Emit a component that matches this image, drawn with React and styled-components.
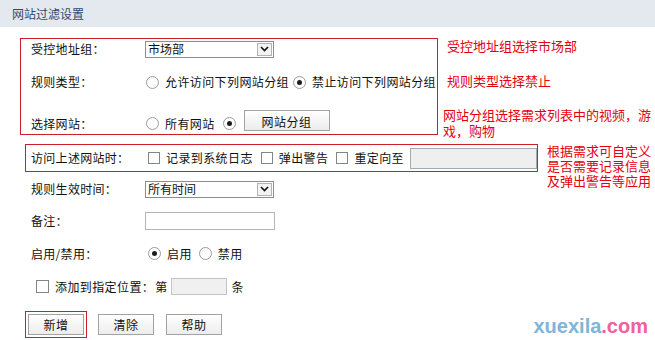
import styled, { createGlobalStyle } from 'styled-components';

const GlobalStyle = createGlobalStyle`
  html, body {
    margin: 0;
    padding: 0;
    background: #ffffff;
  }
  body {
    font-family: "Noto Sans CJK SC", "Liberation Sans", sans-serif;
    font-size: 12px;
    color: #111;
  }
`;

const Page = styled.div`
  width: 655px;
  height: 340px;
  overflow: hidden;
  background: #fff;
`;

const TitleBar = styled.div`
  height: 27px;
  display: flex;
  align-items: center;
  padding-left: 12px;
  background: #e3e9ef;
  color: #2d4a6c;
  font-size: 12px;
`;

const SectionRow = styled.div`
  display: flex;
  align-items: flex-start;
  margin-top: ${(p) => p.$top}px;
  margin-left: ${(p) => p.$left}px;
`;

const RedBox = styled.div`
  box-sizing: border-box;
  width: ${(p) => p.$width}px;
  border: 1px solid #c9202b;
  padding: ${(p) => p.$pad};
`;

const NoteCol = styled.div`
  height: 0;
  margin-left: 9px;
  margin-top: ${(p) => p.$top || 0}px;
  width: ${(p) => p.$width}px;
`;

const Note = styled.div`
  color: #e4000f;
  font-size: 13px;
  line-height: ${(p) => p.$lh || 16}px;
  margin-top: ${(p) => p.$top || 0}px;
  margin-left: ${(p) => p.$left || 0}px;
`;

const FormRow = styled.div`
  display: flex;
  align-items: ${(p) => p.$align || 'center'};
  height: ${(p) => p.$h}px;
  margin-top: ${(p) => p.$top || 0}px;
  line-height: 14px;
`;

const Label = styled.div`
  width: 114px;
  flex-shrink: 0;
  white-space: nowrap;
  letter-spacing: 0.3px;
`;

const Controls = styled.div`
  display: flex;
  align-items: ${(p) => p.$align || 'center'};
  white-space: nowrap;
`;

const Option = styled.span`
  margin-left: ${(p) => (p.$left === undefined ? 6 : p.$left)}px;
  margin-right: ${(p) => p.$gap || 0}px;
  letter-spacing: 0.4px;
`;

const Radio = styled.span`
  box-sizing: border-box;
  width: 13px;
  height: 13px;
  border-radius: 50%;
  border: 1px solid #9c9c9c;
  background: #fdfdfd;
  display: inline-flex;
  align-items: center;
  justify-content: center;
  margin-left: ${(p) => p.$left || 0}px;
  &::after {
    content: '';
    width: 5px;
    height: 5px;
    border-radius: 50%;
    background: ${(p) => (p.$checked ? '#1c1c1c' : 'transparent')};
  }
`;

const Check = styled.span`
  box-sizing: border-box;
  width: ${(p) => p.$size || 12}px;
  height: ${(p) => p.$size || 12}px;
  border: 1px solid #858585;
  background: #fff;
  display: inline-block;
  margin-left: ${(p) => p.$left || 0}px;
`;

const SelectBox = styled.div`
  box-sizing: border-box;
  width: 129px;
  height: 17px;
  border: 1px solid #8d8d8d;
  display: flex;
  align-items: center;
  justify-content: space-between;
  padding-left: 2px;
  background: #fff;
  line-height: 14px;
`;

const SelectArrow = styled.span`
  box-sizing: border-box;
  width: 15px;
  height: 13px;
  margin-right: 1px;
  border: 1px solid #b4b4b4;
  background: #f3f3f3;
  display: flex;
  align-items: center;
  justify-content: center;
`;

const TextBox = styled.div`
  box-sizing: border-box;
  width: ${(p) => p.$w}px;
  height: ${(p) => p.$h}px;
  border: 1px solid ${(p) => p.$border || '#b5b5b5'};
  background: ${(p) => p.$bg || '#fff'};
  margin-left: ${(p) => p.$left || 0}px;
  margin-right: ${(p) => p.$right || 0}px;
`;

const Button = styled.div`
  box-sizing: border-box;
  width: ${(p) => p.$w || 56}px;
  height: ${(p) => p.$h || 21}px;
  border: 1px solid #a3a3a3;
  background: linear-gradient(#ffffff, #ececec);
  display: flex;
  align-items: ${(p) => p.$align || 'center'};
  justify-content: center;
  padding-bottom: ${(p) => p.$pb || 0}px;
  margin-left: ${(p) => p.$left || 0}px;
  line-height: 14px;
  letter-spacing: 0.5px;
  color: #111;
`;

const Highlight = styled.div`
  border: 1px solid #c9202b;
  padding: 2px;
  margin-right: -1px;
`;

const ButtonRow = styled.div`
  display: flex;
  align-items: center;
  gap: 12px;
  margin-top: 8px;
  margin-left: 25px;
`;

const Watermark = styled.div`
  margin-left: auto;
  margin-right: 7px;
  margin-top: 3px;
  font-family: "Liberation Sans", Arial, sans-serif;
  font-weight: bold;
  font-size: 20px;
  color: #7db6d8;
  span {
    color: #f0609c;
  }
`;

const PlainRows = styled.div`
  margin-left: 31px;
  margin-top: 1px;
`;

const Chevron = () => (
  <svg width="9" height="6" viewBox="0 0 9 6">
    <path d="M1 1 L4.5 4.5 L8 1" fill="none" stroke="#111" strokeWidth="1.6" />
  </svg>
);

const Select = ({ value }) => (
  <SelectBox>
    <span>{value}</span>
    <SelectArrow>
      <Chevron />
    </SelectArrow>
  </SelectBox>
);

export default function App() {
  return (
    <Page>
      <GlobalStyle />
      <TitleBar>网站过滤设置</TitleBar>

      <SectionRow $top={11} $left={20}>
        <RedBox $width={418} $pad="1px 10px 3px 10px">
          <FormRow $h={18}>
            <Label>受控地址组：</Label>
            <Select value="市场部" />
          </FormRow>
          <FormRow $h={18} $top={15}>
            <Label>规则类型：</Label>
            <Controls>
              <Radio $left={1} />
              <Option $gap={4}>允许访问下列网站分组</Option>
              <Radio $checked />
              <Option>禁止访问下列网站分组</Option>
            </Controls>
          </FormRow>
          <FormRow $h={21} $top={19} $align="flex-end">
            <Label>选择网站：</Label>
            <Controls $align="flex-end">
              <Radio $left={1} style={{ marginBottom: 1 }} />
              <Option $gap={8}>所有网站</Option>
              <Radio $checked style={{ marginBottom: 1 }} />
              <Button $w={86} $h={21} $left={8} $align="flex-end" $pb={1}>
                网站分组
              </Button>
            </Controls>
          </FormRow>
        </RedBox>
        <NoteCol $width={210}>
          <Note>受控地址组选择市场部</Note>
          <Note $top={19}>规则类型选择禁止</Note>
          <Note $top={18} $left={-4}>
            网站分组选择需求列表中的视频，游戏，购物
          </Note>
        </NoteCol>
      </SectionRow>

      <SectionRow $top={9} $left={25}>
        <RedBox $width={513} $pad="0 0 0 5px">
          <FormRow $h={26}>
            <Label>访问上述网站时：</Label>
            <Controls>
              <Check $left={3} />
              <Option $gap={8}>记录到系统日志</Option>
              <Check />
              <Option $gap={8}>弹出警告</Option>
              <Check />
              <Option>重定向至</Option>
              <TextBox $w={127} $h={21} $left={6} $bg="#efefef" $border="#a2a9b0" />
            </Controls>
          </FormRow>
        </RedBox>
        <NoteCol $width={106} $top={-1}>
          <Note $lh={15}>根据需求可自定义是否需要记录信息及弹出警告等应用</Note>
        </NoteCol>
      </SectionRow>

      <PlainRows>
        <FormRow $h={32}>
          <Label>规则生效时间：</Label>
          <Select value="所有时间" />
        </FormRow>
        <FormRow $h={32}>
          <Label>备注：</Label>
          <TextBox $w={130} $h={18} />
        </FormRow>
        <FormRow $h={33}>
          <Label>启用/禁用：</Label>
          <Controls>
            <Radio $checked $left={3} />
            <Option $gap={7}>启用</Option>
            <Radio />
            <Option>禁用</Option>
          </Controls>
        </FormRow>
        <FormRow $h={33}>
          <Controls>
            <Check $left={5} $size={13} />
            <Option>添加到指定位置：</Option>
            <Option $left={1}>第</Option>
            <TextBox $w={56} $h={17} $left={3} $right={5} $bg="#f0f0f0" $border="#c4c4c4" />
            <span>条</span>
          </Controls>
        </FormRow>
      </PlainRows>

      <ButtonRow>
        <Highlight>
          <Button>新增</Button>
        </Highlight>
        <Button>清除</Button>
        <Button>帮助</Button>
        <Watermark>
          xuexila<span>.com</span>
        </Watermark>
      </ButtonRow>
    </Page>
  );
}
